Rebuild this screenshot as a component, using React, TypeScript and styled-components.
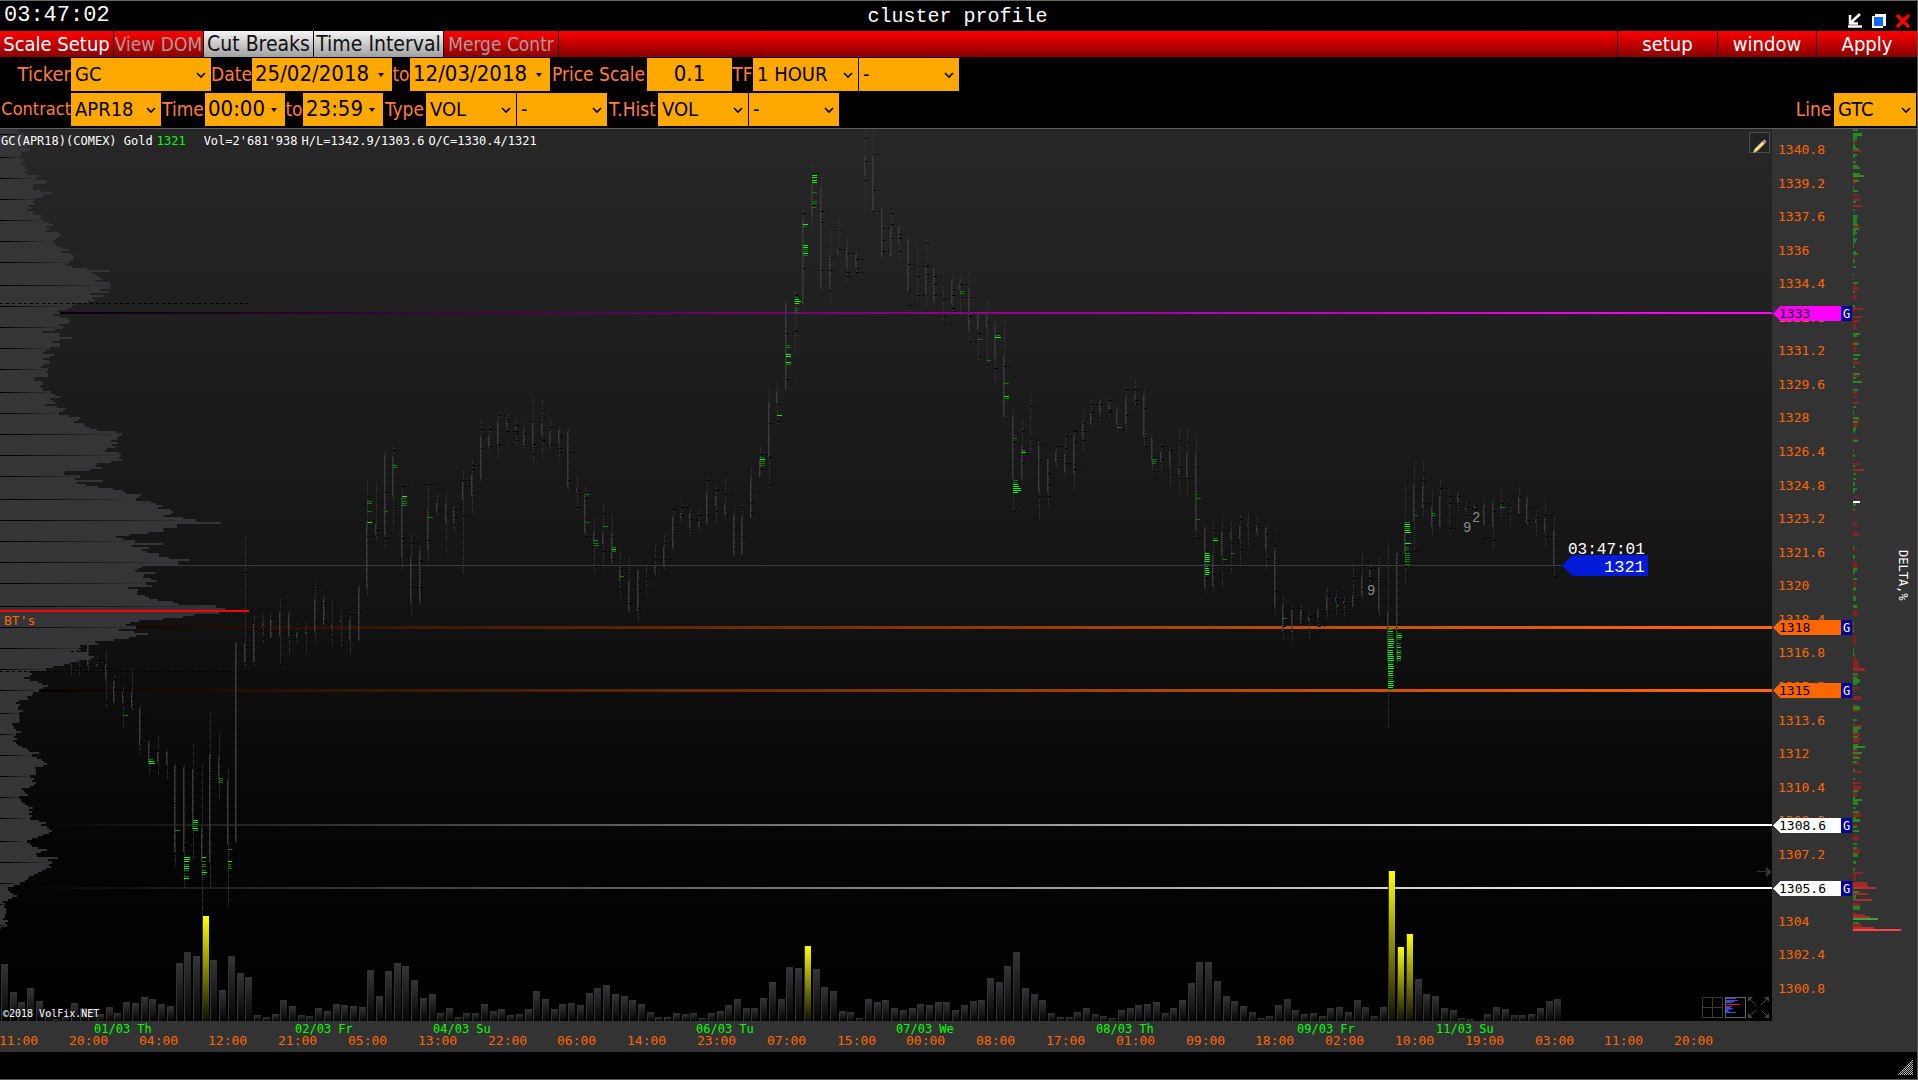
import React from 'react';
import styled, { createGlobalStyle } from 'styled-components';

const ui = '"DejaVu Sans Condensed", "DejaVu Sans", sans-serif';
const mono = '"DejaVu Sans Mono", monospace';
const title = '"Liberation Mono", monospace';

const Global = createGlobalStyle`
  * { box-sizing: border-box; }
  body { margin: 0; background: #000; }
  button, input, select { font: inherit; color: inherit; border: 0; border-radius: 0; margin: 0; }
`;

/* ---------- chart data ---------- */

// Candle and profile points are stored at three units to the pixel.
type Candle = [
  x: number, top: number, bottom: number, bodyTop: number, bodyBottom: number,
  ticks: number[], dim?: number[], bright?: number[]
];
type Panel = { x: number; y: number; candles: Candle[] };

const panels: Panel[] = [
  { x: 0, y: 560, candles: [
    [214, 306, 345, 0, 0, [-274, -310]], [238, 258, 348, 0, 0, [-264, 325]],
    [264, 255, 335, 255, 320, [283, 325]], [292, 282, 335, 312, 320, [300, 325]],
    [319, 270, 446, 312, 360, [-324, 427]], [342, 345, 430, 363, 430, [358, 388]],
    [370, 380, 503, 396, 430, [-402, 433, 484], [466, 15]], [397, 324, 453, 396, 446, [-369, -414, -438]],
    [421, 438, 580, 444, 555, [472, 547, -514]],
    [448, 540, 648, 546, 612, [-583, 622], [598, 12], [604, 15, 610, 18]],
    [475, 528, 640, 576, 606, [571, 634]], [502, 570, 657, 576, 612, [-604, -646]],
    [526, 615, 920, 615, 876, [730, 880], [811, 15]],
    [553, 615, 988, 621, 876, [856, 988], [913, 15, 931, 15, 949, 15], [892, 18, 898, 18, 904, 15, 919, 15, 925, 15, 955, 15]],
    [580, 552, 900, 627, 807, [697, 868], [793, 15, 799, 12, 811, 15], [781, 15, 787, 15, 805, 15]],
    [607, 615, 1068, 804, 908, [-709], [904, 12, 913, 12, 919, 12, 931, 12, 943, 12], [892, 12, 937, 15]],
    [631, 456, 985, 582, 908, [604, 988]],
    [658, 519, 725, 591, 657, [604, 703], [655, 12, 661, 12, 667, 12]],
    [685, 627, 1040, 660, 852, [-787], [868, 12, 913, 9, 919, 9, 925, 12], [904, 12]],
    [709, 250, 846, 250, 846, [403, 856]], [736, -72, 326, 250, 308, [37, 262]],
    [763, 168, 315, 192, 308, [-204, 250]], [790, 162, 250, 186, 204, [199, -235]],
    [814, 162, 235, 175, 235, [175, 214]], [841, 117, 313, 156, 228, [313, -295]],
    [868, 150, 290, 162, 228, [184, 238]], [892, 186, 250, 220, 235, [199, 232]],
    [919, 186, 280, 213, 222, [214, 256]], [946, 66, 245, 117, 216, [76, -186]],
    [973, 105, 195, 117, 195, [130, 184]], [997, 123, 258, 192, 204, [181, 232]],
    [1024, 150, 262, 180, 188, [160, 262]], [1051, 156, 290, 180, 240, [163, 238]],
    [1078, 75, 250, 81, 240, [-157, -250]],
  ] },
  { x: 340, y: 380, candles: [
    [82, 300, 648, 432, 624, [349, 469], [364, 15, 370, 15, 394, 15], [427, 15]],
    [109, 306, 483, 432, 466, [364, 451, -412]], [136, 210, 510, 222, 466, [-337, -475], [394, 9]],
    [160, 198, 447, 232, 350, [211, 376], [256, 15, 262, 12]],
    [187, 312, 568, 354, 534, [319, 475], [355, 12, 364, 15, 370, 15, 376, 15], [349, 15]],
    [214, 462, 705, 531, 666, [490, 622, -544]], [241, 495, 672, 513, 666, [-544, -583, -622]],
    [265, 306, 546, 387, 510, [313, 481], [412, 15]], [292, 342, 408, 369, 396, [364, 388]],
    [319, 336, 522, 369, 430, [-400, -496]], [343, 375, 465, 381, 430, [388, 433, -412]],
    [370, 273, 585, 306, 360, [301, 406, -319]], [397, 237, 402, 285, 350, [256, 337, -268]],
    [424, 123, 308, 168, 297, [-148, -169, -205]], [448, 135, 219, 168, 201, [148, 199]],
    [475, 96, 234, 123, 195, [106, 193, -124]], [502, 105, 162, 117, 138, [118, 154, -124]],
    [529, 117, 200, 141, 150, [-136, -154, -160, -181]], [553, 129, 207, 153, 195, [160, 199, -187]],
    [580, 54, 252, 129, 201, [124, 223, -193]], [607, 60, 234, 129, 165, [-91, -112, -181]],
    [631, 117, 213, 159, 195, [142, 193]], [658, 141, 234, 153, 189, [169, 217, -205]],
    [685, 147, 338, 153, 321, [217, 331, -301]], [712, 285, 390, 324, 338, [-331, -343, -382]],
    [736, 318, 471, 342, 459, [355, 469], [343, 12, 427, 12]],
    [763, 417, 585, 456, 492, [469, 559], [481, 12, 490, 15, 496, 15]],
    [790, 375, 573, 462, 492, [400, 514], [439, 15]],
    [817, 405, 555, 462, 549, [-469, -538], [502, 12, 514, 12], [508, 12]],
    [841, 513, 654, 558, 603, [565, 628], [589, 12]], [868, 531, 705, 606, 693, [583, 670]],
    [895, 570, 723, 570, 693, [-607, -634, -685]], [919, 558, 654, 0, 0, [595, 628]],
    [946, 495, 591, 558, 579, [538, 583]], [973, 462, 567, 501, 555, [490, 538]],
    [1000, 387, 510, 411, 504, [-388, -433, -463]], [1024, 363, 430, 399, 414, [382, -406]],
    [1051, 387, 470, 399, 441, [418, 463]], [1078, 393, 459, 426, 441, [-406, -433]],
    [1102, 294, 435, 342, 429, [301, 406]], [1129, 312, 435, 348, 378, [331, 394]],
    [1156, 294, 420, 375, 402, [343, 406]], [1183, 387, 528, 405, 522, [-451, -508]],
    [1207, 375, 522, 411, 522, [382, 469]], [1234, 261, 414, 294, 414, [337, 400, -370]],
  ] },
  { x: 700, y: 120, candles: [
    [181, 978, 1070, 1018, 1072, [1003, 1048], [1012, 12, 1024, 15, 1030, 15, 1036, 15], [1018, 15]],
    [208, 807, 1093, 846, 1015, [-910, -1012, -1093]], [232, 789, 912, 813, 850, [853, 904], [], [886, 15]],
    [259, 543, 810, 549, 810, [640, 778], [676, 12, 682, 15, 733, 15], [703, 15, 709, 15, 727, 15]],
    [286, 513, 705, 540, 552, [-526, -634], [532, 9, 565, 12, 571, 9, 577, 9], [538, 12, 544, 18, 550, 12]],
    [310, 267, 573, 297, 552, [280, 445], [319, 12, 388, 15, 394, 15, 406, 15], [313, 15, 376, 15, 382, 15, 400, 15]],
    [337, 141, 333, 192, 294, [160, 256], [217, 15, 244, 15, 250, 15, 262, 12], [166, 15, 172, 15, 181, 15, 187, 15]],
    [364, 171, 510, 198, 504, [274, 451, -307]], [391, 330, 550, 405, 504, [-412, -451, -514]],
    [415, 297, 408, 387, 402, [331, 388]], [442, 354, 483, 381, 441, [400, 469, -457]],
    [469, 393, 460, 405, 441, [418, 457, -445]], [496, 27, 276, 108, 168, [-55, -124, -181]],
    [520, 27, 270, 108, 270, [103, 274, -211]], [547, 255, 420, 261, 408, [325, 394, -361]],
    [574, 273, 408, 324, 408, [-280, -313, -355]], [598, 318, 420, 318, 366, [343, 394, -355]],
    [625, 354, 517, 360, 516, [433, 556, -514]], [652, 375, 550, 0, 0, [439, 526, -469]],
    [679, 360, 556, 444, 522, [-370, -439, -463]], [703, 444, 552, 444, 546, [469, 526, -493]],
    [730, 501, 615, 0, 0, [538, 613, -589]], [757, 468, 573, 480, 552, [-508, -526, -565]],
    [781, 468, 585, 486, 510, [493, 532], [514, 15, 520, 12]], [808, 456, 664, 507, 630, [532, 664, -589]],
    [835, 580, 723, 580, 630, [640, 709], [658, 15]], [862, 543, 742, 582, 624, [-607, -733], [721, 12]],
    [886, 594, 792, 618, 717, [640, 745], [646, 15], [652, 18]],
    [913, 600, 906, 708, 888, [739, 898], [790, 15, 835, 15], [829, 15]],
    [940, 870, 1174, 891, 1077, [967, 1174], [955, 12, 1081, 15, 1087, 12], [1093, 15, 1099, 18, 1105, 24, 1111, 24, 1117, 15]],
    [967, 903, 1095, 978, 1077, [-934, -1030], [991, 9], [997, 12]], [991, 828, 1000, 0, 0, [859, 955]],
    [1018, 966, 1200, 966, 1118, [973, 1129, -1018]], [1045, 1018, 1165, 1018, 1118, [-1060, -1093, -1129]],
    [1069, 972, 1044, 996, 1026, [979, 1012]], [1096, 939, 1077, 1002, 1056, [949, 1030, -985]],
    [1123, 939, 1113, 948, 1062, [934, 1048, -967]], [1150, 870, 993, 909, 957, [-910, -934, -961]],
    [1174, 840, 918, 876, 912, [853, 904, -877]], [1201, 834, 906, 846, 882, [853, 892]],
    [1228, 834, 894, 852, 873, [-841, -871, -877]], [1252, 858, 936, 870, 912, [892, 928], [922, 15]],
    [1279, 801, 936, 834, 912, [808, 886]], [1306, 777, 862, 822, 843, [808, 853, -841]],
    [1333, 807, 980, 822, 951, [-865, -955, -979]],
    [1357, 954, 1062, 954, 1026, [1012, 1054], [1018, 15, 1024, 15, 1030, 12]],
    [1384, 966, 1057, 996, 1026, [979, 1018]], [1411, 978, 1102, 990, 1038, [991, 1066]],
    [1438, 921, 1125, 1041, 1062, [-961, -1042, -1075]], [1462, 921, 1131, 1002, 1071, [967, 1075]],
    [1489, 948, 1260, 1002, 1230, [-1042, 1255], [1123, 6, 1135, 15, 1198, 12]],
  ] },
  { x: 1200, y: 440, candles: [
    [16, 258, 462, 264, 444, [-334, -415], [373, 12, 379, 9], [340, 12, 346, 15, 352, 15, 358, 15, 364, 15, 385, 12, 391, 12, 397, 15, 403, 12]],
    [40, 246, 456, 345, 438, [271, 403], [295, 12], [301, 15]],
    [67, 231, 444, 276, 348, [271, 391, -379], [358, 15]], [94, 246, 399, 276, 297, [310, 379], [340, 12]],
    [121, 225, 376, 258, 297, [-238, -328]], [145, 219, 324, 252, 262, [247, 295]],
    [172, 225, 291, 258, 279, [253, -262]], [199, 258, 387, 264, 330, [283, 358]],
    [226, 309, 525, 333, 501, [-316, -454]], [250, 465, 600, 495, 576, [511, 573, -559], [535, 12]],
    [277, 495, 606, 510, 576, [505, 568]], [304, 495, 570, 510, 549, [-517, -544]],
    [328, 516, 600, 528, 543, [529, 586]], [355, 504, 558, 510, 537, [535, 559]],
    [382, 441, 537, 465, 513, [466, 517]], [409, 453, 525, 471, 486, [478, 517], [496, 9]],
    [433, 471, 537, 484, 492, [490, 523]], [460, 372, 501, 465, 501, [415, 478]],
    [487, 339, 474, 408, 468, [-379, -448]], [511, 372, 423, 390, 412, [385, 415]],
    [538, 351, 537, 384, 513, [427, 535]],
    [565, 309, 864, 516, 663, [757],
      [568, 15, 580, 15, 586, 15, 592, 15, 667, 15, 712, 15, 718, 15, 748, 15],
      [574, 15, 598, 18, 604, 18, 610, 18, 616, 15, 622, 18, 631, 15, 637, 15, 643, 15, 649, 18, 655, 18, 661, 18, 673, 15, 679, 18, 685, 18, 694, 15, 700, 15, 706, 15, 724, 18, 730, 15, 736, 18, 742, 15]],
    [592, 339, 687, 339, 663, [-553, -679], [580, 12, 598, 12, 610, 12, 616, 9, 631, 12, 643, 12, 661, 12], [586, 15, 592, 15, 622, 12, 637, 12, 649, 12, 655, 12]],
    [616, 132, 430, 246, 342, [232, 379], [247, 15, 265, 15, 322, 12, 328, 12, 340, 15, 346, 15, 352, 15, 358, 15, 364, 15, 373, 15], [253, 15, 259, 15, 271, 15, 277, 18, 310, 18]],
    [643, 69, 336, 138, 243, [151, 334], [226, 12]], [670, 63, 228, 138, 204, [100, 190, -121]],
    [697, 150, 286, 201, 262, [-184, -208], [220, 9, 226, 12]], [721, 120, 262, 168, 262, [145, -208]],
    [748, 150, 273, 0, 0, [190, 265, -169]], [775, 156, 216, 162, 186, [-169, -196]],
    [799, 183, 235, 201, 210, [202, 226]], [826, 195, 210, 195, 204, [196, -208]],
    [853, 174, 255, 195, 255, [208, 295]], [880, 174, 330, 189, 262, [214, -301]],
    [904, 150, 235, 195, 208, [190, 220], [202, 15]], [931, 201, 267, 0, 0, [220, 253]],
    [958, 138, 222, 168, 222, [-169, 226]], [982, 162, 255, 174, 249, [202, 241]],
    [1009, 213, 291, 237, 249, [232, 271]], [1036, 183, 324, 237, 273, [226, 289]],
    [1063, 231, 411, 270, 375, [-301, -409]],
  ] },
];

// Volume profile: row start, row width.
const upperProfile = [
  27,55,38,72,50,84,80,76,85,90,94,80,97,63,108,57,117,72,123,68,129,63,135,75,147,84,153,75,159,84,165,117,171,108,
  180,141,186,135,192,99,210,123,216,156,222,132,228,126,234,105,243,99,249,105,255,87,261,96,267,81,273,99,279,102,
  285,123,291,120,297,129,306,147,312,159,318,138,324,147,330,138,336,174,342,183,348,177,354,168,360,159,369,165,375,171,
  381,186,387,204,393,183,399,213,405,219,411,222,417,219,423,207,432,201,438,216,444,261,450,330,456,276,462,288,
  468,297,474,303,480,285,486,330,492,333,500,327,507,300,513,324,519,270,525,312,531,276,537,285,543,264,549,225,
  555,216,564,204,570,174,576,180,582,159,588,180,594,204,600,210,606,204,612,177,618,189,627,165,633,126,639,180,
  645,177,651,216,657,180,663,156,669,180,681,150,690,138,696,129,702,162,708,150,714,129,720,147,726,150,732,132,
  738,123,744,144,753,138,759,144,771,105,777,102,783,126,789,129,795,120,801,126,807,129,813,153,822,165,828,180,
  834,150,840,159,846,168,852,135,858,171,864,195,870,189,876,177,885,207,891,240,897,234,903,222,909,252,915,255,
  921,270,927,291,933,348,939,366,948,354,954,351,960,333,966,354,972,336,978,345,984,321,990,315,996,357,1002,363,
  1011,357,1017,366,1023,333,1029,291,1035,288,1041,306,1047,270,1053,195,1059,192,1065,240,1074,225,1080,309,
  1086,231,1092,258,1098,294,1104,339,1110,369,1116,378,1122,423,1128,417,1134,408,1143,453,1149,468,1155,486,
  1161,474,1167,513,1173,522,1179,513,1185,492,1191,549,1197,588,1206,663,1212,531,1224,489,1230,492,1236,444,
  1242,387,1248,348,1254,369,1260,405,1269,489,1275,396,1281,447,1287,426,1293,441,1299,477,1311,507,1317,570,
];
const lowerProfile = [
  3,534,15,426,24,414,30,405,36,465,42,432,48,429,54,453,60,471,66,438,75,456,81,384,87,414,93,411,105,435,111,447,
  117,474,123,519,129,534,135,648,144,675,156,657,162,582,168,549,174,489,180,417,186,390,192,378,198,408,207,357,
  213,402,219,444,225,408,231,387,237,342,243,285,249,294,255,240,261,243,270,231,276,261,288,282,294,273,300,234,
  306,210,312,192,318,159,324,138,333,87,339,96,345,90,351,72,357,90,363,114,369,126,375,144,381,129,387,117,
  396,99,402,96,408,81,414,84,420,57,426,48,432,60,438,54,450,69,456,57,465,60,471,57,477,60,483,57,489,36,495,39,
  501,42,507,48,513,63,519,48,528,42,534,51,540,39,546,48,552,54,558,66,564,81,570,87,576,117,582,96,591,111,
  597,126,603,132,609,141,615,129,621,105,627,108,645,90,654,102,660,96,666,108,672,102,678,90,684,66,690,72,
  696,75,702,84,708,57,717,63,723,66,729,75,735,84,741,99,747,87,753,96,759,87,765,96,771,90,780,117,786,138,
  792,123,798,141,804,147,810,156,816,147,822,129,828,114,834,96,840,81,849,90,855,96,861,114,867,141,873,123,
  879,108,885,111,891,174,897,144,903,156,912,147,918,153,924,138,930,126,936,114,942,102,948,87,954,84,960,75,
  966,60,975,42,981,24,993,30,999,39,1005,51,1011,36,1017,24,1023,9,1029,15,1038,12,1044,18,1062,15,1074,9,
  1080,24,1086,15,1092,21,1101,3,1107,0,
];
const profileRows: [number, number][] = [];
for (let i = 0; i < upperProfile.length; i += 2) profileRows.push([120 + Math.round(upperProfile[i] / 3), upperProfile[i + 1] / 3]);
for (let i = 0; i < lowerProfile.length; i += 2) profileRows.push([560 + Math.round(lowerProfile[i] / 3), lowerProfile[i + 1] / 3]);
const profilePath = 'M0 129' + profileRows.map(([y, w]) => `V${y}H${Math.round(w)}`).join('') + 'V930H0Z';
const widthAt = (y: number) => {
  let w = 0;
  for (const [rowY, rowW] of profileRows) if (rowY <= y) w = rowW;
  return Math.round(w);
};
const profileGrid = [134, 157, 178, 199, 220, 241, 262, 285, 306, 327, 348, 369, 392, 413, 434, 455, 476, 499, 520, 541, 562,
  583, 606, 627, 648, 669, 690, 713, 734, 755, 776, 797, 818, 841, 862, 883, 904, 925];

const volumes = [
  57,29,19,33,20,9,2,4,18,13,11,7,14,8,19,18,24,22,17,15,58,69,65,105,61,31,65,48,44,6,4,7,21,15,6,5,13,10,17,16,15,14,
  51,25,50,58,55,41,23,27,8,13,4,8,8,17,10,12,6,7,12,30,22,12,17,18,16,28,33,36,27,25,21,17,9,4,4,8,7,8,3,8,10,16,22,13,13,
  23,39,22,54,53,75,52,34,30,10,9,3,22,19,21,13,11,13,17,16,19,
  19,11,16,20,21,43,39,55,69,33,27,21,8,4,4,9,13,7,5,3,11,13,16,17,19,8,13,21,38,59,59,40,25,20,15,9,3,5,16,22,11,7,8,5,
  13,14,9,21,14,5,14,150,74,87,42,27,25,13,11,3,2,0,7,14,12,6,6,7,13,20,22,
];
const spikes = new Set([23, 92, 159, 160, 161]);

const hours = ['11:00','20:00','04:00','12:00','21:00','05:00','13:00','22:00','06:00','14:00','23:00','07:00','15:00',
  '00:00','08:00','17:00','01:00','09:00','18:00','02:00','10:00','19:00','03:00','11:00','20:00'];
const days: [number, string][] = [[95, '01/03 Th'], [296, '02/03 Fr'], [434, '04/03 Su'], [697, '06/03 Tu'],
  [897, '07/03 We'], [1097, '08/03 Th'], [1298, '09/03 Fr'], [1437, '11/03 Su']];

const levels = [
  { price: '1333', y: 313, color: '#ff00ff', weight: 2 },
  { price: '1318', y: 627, color: '#ff6600', weight: 3 },
  { price: '1315', y: 690, color: '#ff6600', weight: 3 },
  { price: '1308.6', y: 825, color: '#ffffff', weight: 2 },
  { price: '1305.6', y: 888, color: '#ffffff', weight: 2 },
];
const prices = Array.from({ length: 26 }, (_, i) => ({
  label: String(Math.round((1340.8 - i * 1.6) * 10) / 10),
  y: Math.round(149 + i * 33.56),
}));

// Delta rows: start, end, signed width (negative is selling).
const deltaUpper = [
  27,33,15,39,48,27,48,60,12,60,66,6,66,72,-12,72,78,6,78,84,9,84,90,18,90,96,-27,102,108,12,108,115,6,123,129,9,
  129,135,-9,135,141,15,141,147,21,159,165,21,165,171,33,171,179,-12,180,186,18,186,195,-9,198,210,3,210,216,15,
  222,228,-18,234,243,-21,243,249,9,255,261,-27,267,273,6,285,291,15,291,312,12,312,318,15,318,324,-24,324,330,18,
  330,336,9,336,342,12,342,348,6,354,360,12,360,370,9,370,385,3,393,399,9,399,405,15,405,411,-9,417,430,6,438,444,9,
  462,468,3,471,480,-3,486,492,15,492,500,-9,500,513,-14,513,519,6,525,531,-15,531,540,-9,555,564,6,564,570,-30,
  570,576,-6,588,594,-27,600,606,-21,610,620,-9,620,630,-12,639,645,21,645,651,12,663,669,-15,669,675,18,675,695,-9,
  702,708,21,714,720,15,720,726,-9,726,732,-21,738,744,6,759,765,21,765,771,-18,771,777,9,783,789,27,807,813,15,
  813,822,-12,827,834,-15,846,852,-18,858,864,9,870,885,3,891,897,18,897,903,-21,903,909,15,909,921,-15,921,933,9,
  933,939,6,954,960,-12,960,966,15,978,990,-3,990,996,3,1002,1011,6,1011,1020,-3,1029,1035,-21,1035,1041,6,
  1047,1053,-33,1059,1065,9,1074,1080,9,1086,1098,6,1104,1110,12,1110,1120,6,1127,1134,-12,1149,1158,9,1160,1166,-6,
  1167,1173,6,1180,1196,-3,1206,1212,-9,1212,1218,-15,1224,1230,-6,1236,1242,-12,1242,1248,-18,1275,1287,3,
  1287,1293,-12,1305,1317,6,
];
const deltaLower = [
  211,229,-12,230,238,12,238,246,6,256,262,12,266,278,-9,280,290,9,296,300,-6,303,311,8,311,317,9,326,335,12,
  340,346,-15,346,356,-11,372,378,4,378,388,-6,388,396,3,405,432,-10,436,455,3,455,460,6,461,467,-9,467,486,-15,
  486,490,-21,490,498,-36,504,510,15,510,515,-18,515,521,12,521,530,21,530,536,12,541,547,-18,547,552,-6,564,575,-24,
  586,590,-12,591,600,21,600,606,-15,625,630,12,634,640,3,640,645,-27,645,650,24,650,660,14,661,669,-20,669,674,15,
  674,680,-24,680,688,-18,690,695,15,695,700,36,700,705,12,705,711,-15,711,716,27,716,724,-18,724,729,21,733,740,12,
  740,746,-18,755,760,6,760,766,-27,779,784,6,789,794,-24,794,800,-9,800,810,-24,810,815,15,815,825,-12,826,833,6,
  833,839,27,839,848,15,855,860,9,865,870,18,870,880,-24,881,887,9,887,893,21,899,905,-15,905,910,12,915,920,18,
  928,935,-12,935,941,-18,949,955,12,960,965,12,965,975,-20,975,986,15,996,1004,9,1010,1015,-12,1015,1022,6,
  1024,1030,-30,1030,1048,-10,1051,1057,-42,1057,1064,-45,1064,1069,-69,1074,1079,18,1079,1085,-45,1085,1095,8,
  1095,1100,-57,1104,1114,-20,1114,1124,21,1128,1134,-8,1134,1139,-36,1139,1145,-51,1145,1150,75,1155,1160,18,
  1160,1168,-27,1168,1173,-63,1173,1179,-144,
];
const deltaRows: { y: number; h: number; w: number }[] = [];
const addDelta = (rows: number[], origin: number, unit: number) => {
  for (let i = 0; i < rows.length; i += 3) {
    const y = Math.round(origin + rows[i] * unit);
    const end = Math.round(origin + rows[i + 1] * unit);
    deltaRows.push({ y, h: Math.max(1, end - y), w: Math.round(rows[i + 2] / 3) });
  }
};
addDelta(deltaUpper, 120, 1 / 3);
addDelta(deltaLower, 480, 0.3827);
const deltaColor = (w: number) => {
  const t = Math.min(1, Math.abs(w) / 48);
  const hi = Math.round(118 + 137 * t);
  const lo = Math.round(30 + 38 * t);
  return w < 0 ? `rgb(${hi},${lo},${lo})` : `rgb(${lo},${Math.round(122 + 90 * t)},${lo})`;
};

/* ---------- styled parts ---------- */

const Window = styled.div`
  display: grid;
  grid-template-rows: 31px 26px auto minmax(0, 1fr) 27px;
  height: 100vh;
  min-height: 600px;
  border-right: 1px solid #5a5a5a;
  border-bottom: 1px solid #5a5a5a;
  background: #000;
  color: #fff;
  font: 20px/24px ${ui};
`;
const TitleBar = styled.header`
  display: grid;
  grid-template-columns: 1fr auto 1fr;
  align-items: center;
  border-top: 1px solid #666;
  padding: 0 6px 0 4px;
`;
const Clock = styled.time`
  font: 22px/22px ${title};
`;
const Title = styled.h1`
  margin: 0;
  padding-top: 2px;
  font: 20px/24px ${title};
`;
const WindowButtons = styled.div`
  display: flex;
  justify-content: flex-end;
  gap: 8px;
  padding-top: 4px;
`;
const IconButton = styled.button`
  display: block;
  width: 16px;
  height: 16px;
  padding: 0;
  background: none;
`;
const Toolbar = styled.nav`
  display: flex;
  background: linear-gradient(#ff0000, #850000);
`;
const toolFont = { light: 21, muted: 19, plain: 20 };
const ToolButton = styled.button<{ $w: number; $tone?: 'light' | 'muted'; $edge?: 'left' }>`
  width: ${p => p.$w}px;
  padding: 0;
  white-space: nowrap;
  text-align: center;
  font-size: ${p => toolFont[p.$tone ?? 'plain']}px;
  background: ${p => (p.$tone === 'light' ? 'linear-gradient(#f4f4f4, #a0a0a0)' : 'none')};
  color: ${p => (p.$tone === 'light' ? '#111' : p.$tone === 'muted' ? '#b09a9a' : '#fff')};
  border-${p => p.$edge ?? 'right'}: 1px solid #200;
`;
const Spacer = styled.div`
  flex: 1;
`;
const Controls = styled.form`
  display: grid;
  gap: 2px;
  padding: 1px 0;
  border-bottom: 1px solid #5e5e5e;
`;
const ControlRow = styled.div`
  display: flex;
  height: 33px;
  padding-right: 1px;

  &:last-child { margin-bottom: 1px; }
`;
const Label = styled.label<{ $w: number; $align?: string; $size?: number }>`
  width: ${p => p.$w}px;
  text-align: ${p => p.$align ?? 'center'};
  white-space: nowrap;
  color: #ff7f40;
  font-size: ${p => p.$size ?? 19}px;
  line-height: 32px;
`;
const Field = styled.div<{ $w: number }>`
  display: grid;
  grid-template-columns: 1fr 15px;
  align-items: center;
  width: ${p => p.$w}px;
  background: #ffa800;
  color: #000;

  & + & { margin-left: 1px; }
  svg { grid-area: 1 / 2; pointer-events: none; }
`;
const Select = styled.select`
  grid-area: 1 / 1 / 2 / 3;
  width: 100%;
  height: 33px;
  padding: 0 14px 2px 4px;
  appearance: none;
  background: none;
`;
const TextInput = styled.input<{ $center?: boolean }>`
  grid-area: 1 / 1 / 2 / 3;
  width: 100%;
  height: 33px;
  padding: 0 3px 2px;
  background: none;
  font-size: 22px;
  text-align: ${p => (p.$center ? 'center' : 'left')};
`;
const Workspace = styled.main`
  display: grid;
  grid-template: minmax(0, 1fr) 31px / minmax(0, 1fr) 145px;
  background: #333;
`;
const Plot = styled.section`
  position: relative;
  overflow: hidden;
  background: linear-gradient(#272727, #151515 48%, #050505 80%, #000);
`;
const Drawing = styled.svg`
  display: block;
  width: 100%;
  height: 100%;
`;
const Summary = styled.p`
  position: absolute;
  top: 4px;
  left: 1px;
  display: flex;
  gap: 4px;
  margin: 0;
  font: 12px/16px ${mono};
  white-space: pre;
`;
const Last = styled.span`
  color: #0f0;
  margin-right: 14px;
`;
const PencilButton = styled.button`
  position: absolute;
  top: 3px;
  right: 2px;
  width: 21px;
  height: 21px;
  padding: 2px;
  border: 1px solid #4c4c4c;
  background: #222;
`;
const PlotTools = styled.div`
  position: absolute;
  right: 3px;
  bottom: 3px;
  display: flex;
  gap: 2px;
`;
const PlotTool = styled.button`
  display: block;
  width: 21px;
  height: 21px;
  padding: 0;
  background: none;
`;
const Copyright = styled.small`
  position: absolute;
  left: 3px;
  bottom: 1px;
  font: 10px/12px ${mono};
`;
const PriceAxis = styled.aside`
  grid-area: 1 / 2 / 3 / 3;
  min-height: 0;
  overflow: hidden;
`;
const TimeAxis = styled.section`
  overflow: hidden;
`;
const AxisText = styled.text`
  font: 13px ${mono};
  fill: #ff6600;
`;
const TagText = styled(AxisText)`
  fill: #000;
`;
const DayText = styled.text`
  font: 12px ${mono};
  fill: #00ff00;
`;
const MarkText = styled.text`
  font: 14px ${title};
  fill: #888;
`;
const QuoteText = styled.text<{ $size: number }>`
  font: ${p => p.$size}px ${title};
  fill: #fff;
`;
const SmallText = styled.text`
  font: 12px ${mono};
  fill: #fff;
`;
const Footer = styled.footer`
  display: flex;
  justify-content: flex-end;
  align-items: flex-end;
  padding: 4px;
`;

/* ---------- components ---------- */

const Chevron = () => (
  <svg width="10" height="8" viewBox="0 0 10 8" aria-hidden="true">
    <path d="M1 2l4 4 4-4" fill="none" stroke="#000" strokeWidth="1.6" />
  </svg>
);
const Caret = () => (
  <svg width="8" height="6" viewBox="0 0 8 6" aria-hidden="true">
    <path d="M1 1h6l-3 4z" fill="#000" />
  </svg>
);

const SelectField = ({ id, w, value }: { id: string; w: number; value: string }) => (
  <Field $w={w}>
    <Select id={id} aria-label={id} defaultValue={value}>
      <option>{value}</option>
    </Select>
    <Chevron />
  </Field>
);
const DateField = ({ id, w, value }: { id: string; w: number; value: string }) => (
  <Field $w={w}>
    <TextInput id={id} defaultValue={value} />
    <Caret />
  </Field>
);

const CandleShape = ({ panel, candle }: { panel: Panel; candle: Candle }) => {
  const [cx, top, bottom, bodyTop, bodyBottom, ticks, dim = [], bright = []] = candle;
  const x = panel.x + Math.floor(cx / 3);
  const at = (v: number) => panel.y + Math.floor(v / 3);
  const bars = (list: number[], fill: string) =>
    list.map((v, i) => (i % 2 ? null : (
      <rect key={fill + v} x={x} y={at(v)} width={Math.round(list[i + 1] / 3)} height="1" fill={fill} />
    )));
  return (
    <g>
      <path d={`M${x + 0.5} ${at(top)}V${at(bottom)}`} stroke="#39393b" strokeDasharray="1 1" />
      {bodyBottom > 0 && <rect x={x - 1} y={at(bodyTop)} width="1" height={Math.max(1, at(bodyBottom) - at(bodyTop))} fill="#3a3a3c" />}
      {ticks.map(t => (
        <path key={t} fill="#000" d={t < 0
          ? `M${x} ${at(-t)}h3v1h-3z`
          : `M${x} ${at(t)}h3v1h-3zM${x + 6} ${at(t)}h1v1h-1z`} />
      ))}
      {bars(dim, '#008000')}
      {bars(bright, '#00ff00')}
    </g>
  );
};

const PlotDrawing = () => (
  <Drawing viewBox="0 129 1772 892" preserveAspectRatio="xMinYMin slice" shapeRendering="crispEdges" role="img" aria-label="Cluster profile chart">
    <defs>
      {levels.map(l => (
        <linearGradient key={l.price} id={`level-${l.price}`} gradientUnits="userSpaceOnUse" x1="0" x2="1720" y1="0" y2="0">
          <stop offset="0" stopColor="#000" />
          <stop offset="1" stopColor={l.color} />
        </linearGradient>
      ))}
      <linearGradient id="bar" x1="0" x2="0" y1="0" y2="1">
        <stop offset="0" stopColor="#353537" /><stop offset="1" stopColor="#050505" />
      </linearGradient>
      <linearGradient id="spike" x1="0" x2="0" y1="0" y2="1">
        <stop offset="0" stopColor="#ffff00" /><stop offset="1" stopColor="#101000" />
      </linearGradient>
      <linearGradient id="rule" x1="0" x2="1" y1="0" y2="0">
        <stop offset="0" stopColor="#000" /><stop offset="1" stopColor="#333335" />
      </linearGradient>
    </defs>
    {levels.map(l => (
      <rect key={l.price} x="0" y={l.y - 1} width="1772" height={l.weight} fill={`url(#level-${l.price})`} />
    ))}
    <rect x="0" y="565" width="1564" height="1" fill="#3a3a3a" />
    <path d={profilePath} fill="#353537" />
    {profileGrid.map(y => <rect key={y} x="0" y={y} width={widthAt(y)} height="1" fill="url(#rule)" />)}
    <path d="M0 303.5H248M0 671.5H248" stroke="#000" strokeDasharray="3 3" />
    {panels.map(panel => panel.candles.map(c => <CandleShape key={panel.x + c[0] / 3} panel={panel} candle={c} />))}
    <rect x="0" y="610" width="249" height="2" fill="#f00" />
    {volumes.map((h, i) => {
      const x = Math.round(1 + i * 8.726);
      return h > 0 && (
        <g key={i}>
          <rect x={x + 1} y={1021 - h} width="6" height={h} fill={spikes.has(i) ? 'url(#spike)' : 'url(#bar)'} />
          <rect x={x} y={1021 - h} width="1" height={h} fill="#333335" />
        </g>
      );
    })}
    <AxisText x="4" y="625">BT's</AxisText>
    <MarkText x="1367" y="595">9</MarkText>
    <MarkText x="1463" y="532">9</MarkText>
    <MarkText x="1472" y="522">2</MarkText>
    <QuoteText $size={16} x="1568" y="554">03:47:01</QuoteText>
    <path d="M1562 565.5L1572 555H1648V576H1572Z" fill="#001bd8" />
    <QuoteText $size={17} x="1604" y="572">1321</QuoteText>
    <path d="M1757 871.5H1767" stroke="#333" />
    <path d="M1766 867L1772 872L1766 877Z" fill="#333" />
  </Drawing>
);

const PriceDrawing = () => (
  <Drawing viewBox="1772 129 145 923" preserveAspectRatio="xMinYMin slice" shapeRendering="crispEdges">
    {prices.map(p => <AxisText key={p.label} x="1778" y={p.y + 5}>{p.label}</AxisText>)}
    {deltaRows.map(r => <rect key={r.y + ':' + r.w} x="1853" y={r.y} width={Math.abs(r.w)} height={r.h} fill={deltaColor(r.w)} />)}
    <rect x="1853" y="501" width="7" height="2" fill="#fff" />
    {levels.map(l => (
      <g key={l.price}>
        <path d={`M1773 ${l.y}L1780 ${l.y - 7}H1841V${l.y + 8}H1780Z`} fill={l.color} />
        <TagText x="1779" y={l.y + 5}>{l.price}</TagText>
        <rect x="1841" y={l.y - 7} width="11" height="15" fill="#000099" />
        <SmallText x="1843" y={l.y + 5}>G</SmallText>
      </g>
    ))}
    <SmallText transform="translate(1899 550) rotate(90)">DELTA,%</SmallText>
  </Drawing>
);

export default function App() {
  return (
    <Window>
      <Global />
      <TitleBar>
        <Clock>03:47:02</Clock>
        <Title>cluster profile</Title>
        <WindowButtons>
          <IconButton aria-label="Minimise">
            <svg width="16" height="16" viewBox="0 0 16 16"><path d="M1 13.5h14M13 1L4 9.500M3 2v8.500h8" fill="none" stroke="#fff" strokeWidth="2.500" /></svg>
          </IconButton>
          <IconButton aria-label="Restore">
            <svg width="16" height="16" viewBox="0 0 16 16"><path d="M4 1h11v12h-3v2H1V3h3z" fill="#fff" /><path d="M3 4h9v9H3z" fill="#0a6cff" /></svg>
          </IconButton>
          <IconButton aria-label="Close">
            <svg width="16" height="16" viewBox="0 0 16 16"><path d="M2 2l12 12M14 2L2 14" stroke="#f00" strokeWidth="3.200" /></svg>
          </IconButton>
        </WindowButtons>
      </TitleBar>

      <Toolbar>
        <ToolButton $w={114}>Scale Setup</ToolButton>
        <ToolButton $w={90} $tone="muted">View DOM</ToolButton>
        <ToolButton $w={110} $tone="light">Cut Breaks</ToolButton>
        <ToolButton $w={130} $tone="light">Time Interval</ToolButton>
        <ToolButton $w={115} $tone="muted">Merge Contr</ToolButton>
        <Spacer />
        <ToolButton $w={100} $edge="left">setup</ToolButton>
        <ToolButton $w={99} $edge="left">window</ToolButton>
        <ToolButton $w={101} $edge="left">Apply</ToolButton>
      </Toolbar>

      <Controls>
        <ControlRow>
          <Label htmlFor="ticker" $w={71} $align="right" $size={20}>Ticker</Label>
          <SelectField id="ticker" w={140} value="GC" />
          <Label htmlFor="date-from" $w={41}>Date</Label>
          <DateField id="date-from" w={140} value="25/02/2018" />
          <Label htmlFor="date-to" $w={18}>to</Label>
          <DateField id="date-to" w={140} value="12/03/2018" />
          <Label htmlFor="scale" $w={97}>Price Scale</Label>
          <Field $w={85}><TextInput id="scale" $center defaultValue="0.1" /></Field>
          <Label htmlFor="tf" $w={21}>TF</Label>
          <SelectField id="tf" w={105} value="1 HOUR" />
          <SelectField id="tf-extra" w={100} value="-" />
        </ControlRow>
        <ControlRow>
          <Label htmlFor="contract" $w={71} $align="right" $size={18}>Contract</Label>
          <SelectField id="contract" w={90} value="APR18" />
          <Label htmlFor="time-from" $w={44}>Time</Label>
          <DateField id="time-from" w={80} value="00:00" />
          <Label htmlFor="time-to" $w={18}>to</Label>
          <DateField id="time-to" w={80} value="23:59" />
          <Label htmlFor="type" $w={43}>Type</Label>
          <SelectField id="type" w={90} value="VOL" />
          <SelectField id="type-extra" w={90} value="-" />
          <Label htmlFor="hist" $w={51}>T.Hist</Label>
          <SelectField id="hist" w={90} value="VOL" />
          <SelectField id="hist-extra" w={90} value="-" />
          <Spacer />
          <Label htmlFor="line" $w={41}>Line</Label>
          <SelectField id="line" w={82} value="GTC" />
        </ControlRow>
      </Controls>

      <Workspace>
        <Plot>
          <PlotDrawing />
          <Summary>
            <span>GC(APR18)(COMEX) Gold</span>
            <Last>1321</Last>
            <span>Vol=2'681'938</span>
            <span>H/L=1342.9/1303.6</span>
            <span>O/C=1330.4/1321</span>
          </Summary>
          <PencilButton aria-label="Draw">
            <svg width="15" height="15" viewBox="0 0 15 15">
              <path d="M1 14l1.500-4 8-8 2.500 2.500-8 8z" fill="#f3d58a" stroke="#6b5a3a" strokeWidth="0.600" />
              <path d="M3 11.500l8-8" stroke="#fff2b0" />
              <path d="M10 2.500l2.500 2.500 1-1L11 1.500z" fill="#7fa98f" />
              <path d="M11 1.500L13.500 4l1-1.500L12.500 0.500z" fill="#e08a96" />
              <path d="M1 14l.6-1.800 1.200 1.200z" fill="#999" />
            </svg>
          </PencilButton>
          <Copyright>©2018 VolFix.NET</Copyright>
          <PlotTools>
            <PlotTool aria-label="Grid">
              <svg width="21" height="21" viewBox="0 0 21 21"><path d="M.5.5h20v20H.5zM10.500.5v20M.5 10.500h20" fill="none" stroke="#3a3a3a" /></svg>
            </PlotTool>
            <PlotTool aria-label="Profile">
              <svg width="21" height="21" viewBox="0 0 21 21" shapeRendering="crispEdges">
                <path d="M.5.5h20v20H.5z" fill="#000" stroke="#666" />
                <path d="M1 1.500h10M1 3.500h12M1 4.500h9M1 5.500h6M1 9.500h6M1 10.500h4M1 11.500h7M1 12.500h5M1 13.500h2M1 14.500h4M1 15.500h10" stroke="#4444cc" />
                <path d="M1 7.500h14" stroke="#e02030" />
              </svg>
            </PlotTool>
            <PlotTool aria-label="Expand">
              <svg width="21" height="21" viewBox="0 0 21 21">
                <path d="M1 1l7 7M20 1l-7 7M1 20l7-7M20 20l-7-7" stroke="#444" />
                <path d="M0 0h5L0 5zM21 0v5l-5-5zM0 21v-5l5 5zM21 21h-5l5-5z" fill="#444" />
              </svg>
            </PlotTool>
          </PlotTools>
        </Plot>
        <PriceAxis><PriceDrawing /></PriceAxis>
        <TimeAxis>
          <Drawing viewBox="0 1021 1772 31" preserveAspectRatio="xMinYMin slice">
            {days.map(([x, label]) => <DayText key={x} x={x - 1} y="1033">{label}</DayText>)}
            {hours.map((label, i) => <AxisText key={i} x={Math.round(-1 + i * 69.8)} y="1045">{label}</AxisText>)}
          </Drawing>
        </TimeAxis>
      </Workspace>

      <Footer>
        <svg width="16" height="16" viewBox="0 0 16 16" shapeRendering="crispEdges" aria-hidden="true">
          <defs>
            <pattern id="grip" width="2" height="2" patternUnits="userSpaceOnUse">
              <path d="M0 0h1v1H0zM1 1h1v1H1z" fill="#bbb" />
            </pattern>
          </defs>
          <path d="M16 0v16H0z" fill="url(#grip)" />
        </svg>
      </Footer>
    </Window>
  );
}
